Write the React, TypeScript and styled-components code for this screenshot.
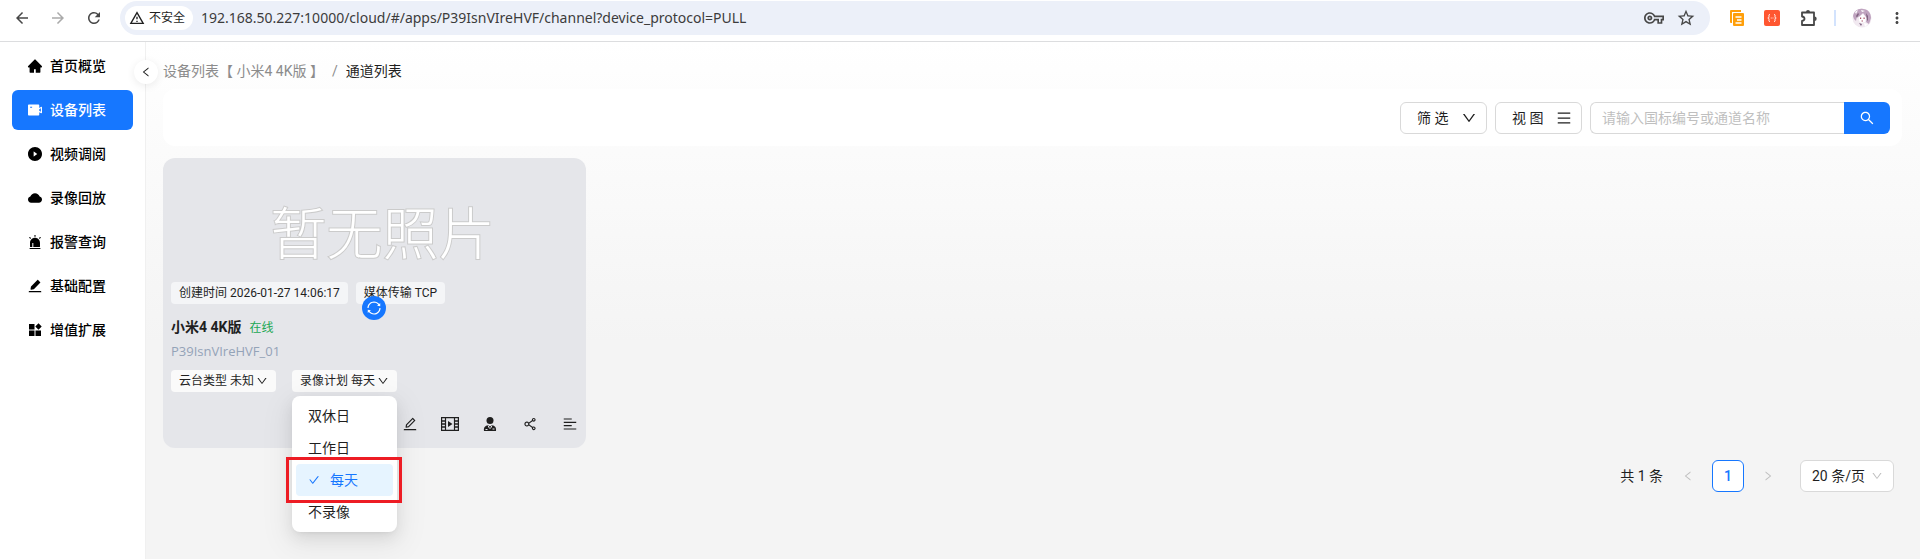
import React from "react";
import styled, { createGlobalStyle, css } from "styled-components";
import {
  AiFillHome, AiFillVideoCamera, AiFillPlayCircle, AiFillCloud, AiFillAlert, AiFillEdit,
  AiOutlineDown, AiOutlineMenu, AiOutlineSearch, AiOutlineSync, AiOutlineCheck, AiOutlineEdit,
  AiOutlineShareAlt, AiOutlineAlignLeft, AiOutlineLeft, AiOutlineRight,
} from "react-icons/ai";
import {
  MdArrowBack, MdArrowForward, MdRefresh, MdOutlineWarningAmber, MdOutlineVpnKey,
  MdStarOutline, MdMoreVert,
} from "react-icons/md";

const Global = createGlobalStyle`
  *, *::before, *::after { box-sizing: border-box; }
  body {
    margin: 0;
    font-family: Roboto, "Noto Sans CJK SC", sans-serif;
    font-size: 14px;
    line-height: 22px;
    color: #1f1f1f;
  }
  button, input, select { font: inherit; color: inherit; }
  button { padding: 0; border: 0; background: none; cursor: pointer; }
  svg { display: block; flex: none; }
`;

const Page = styled.div`
  display: flex;
  flex-direction: column;
  min-height: 100vh;
`;

/* Browser bar */
const BrowserBar = styled.header`
  display: flex;
  align-items: center;
  height: 42px;
  padding: 1px 14px 6px 10px;
  border-bottom: 1px solid #dcdddf;
  background: #fff;
`;
const NavButton = styled.button<{ $muted?: boolean }>`
  display: grid;
  place-items: center;
  width: 24px;
  height: 24px;
  margin-right: 12px;
  color: ${(p) => (p.$muted ? "#aaa" : "#474747")};
`;
const Address = styled.div`
  display: flex;
  align-items: center;
  flex: 1;
  height: 34px;
  margin-left: 2px;
  padding: 0 14px 0 5px;
  border-radius: 17px;
  background: #ecf0f9;
`;
const Insecure = styled.span`
  display: flex;
  align-items: center;
  gap: 4px;
  height: 24px;
  padding: 0 8px 0 4px;
  border-radius: 12px;
  background: #fff;
  font-size: 12px;
`;
const UrlInput = styled.input`
  flex: 1;
  min-width: 0;
  margin-left: 8px;
  padding: 0;
  border: 0;
  outline: 0;
  background: none;
  font-family: "Noto Sans", sans-serif;
  font-size: 14px;
  color: #3c3c3c;
`;
const AddressIcons = styled.div`
  display: flex;
  gap: 12px;
  color: #474747;
`;
const Extensions = styled.div`
  display: flex;
  align-items: center;
  gap: 20px;
  margin: 0 16px 0 20px;
  color: #474747;
`;
const Profile = styled.div`
  display: flex;
  align-items: center;
  gap: 16px;
  color: #474747;
`;
const Separator = styled.span`
  width: 2px;
  height: 16px;
  background: #d3e3fd;
`;

/* Layout */
const Body = styled.div`
  display: flex;
  flex: 1;
`;
const Sidebar = styled.aside`
  position: relative;
  flex: none;
  width: 146px;
  padding: 4px 12px;
  border-right: 1px solid #f0f0f0;
  background: #fff;
`;
const Nav = styled.nav`
  display: flex;
  flex-direction: column;
  gap: 4px;
`;
const NavItem = styled.a<{ $active?: boolean }>`
  display: flex;
  align-items: center;
  gap: 7px;
  height: 40px;
  padding: 0 15px;
  border-radius: 6px;
  font-weight: 500;
  text-decoration: none;
  white-space: nowrap;
  color: #000;
  svg { width: 16px; height: 16px; }
  ${(p) => p.$active && css`
    background: #1677ff;
    color: #fff;
  `}
`;
const Collapse = styled.button`
  position: absolute;
  top: 18px;
  right: -13px;
  display: grid;
  place-items: center;
  width: 24px;
  height: 24px;
  border-radius: 50%;
  background: #fff;
  box-shadow: 0 2px 8px rgba(0, 0, 0, 0.08);
`;
const Main = styled.main`
  flex: 1;
  min-width: 0;
  padding: 18px 18px 24px 17px;
  background: linear-gradient(#fff, #f4f4f4 300px);
`;
const Breadcrumb = styled.nav`
  display: flex;
  gap: 8px;
  color: #8c8c8c;
  a { color: inherit; text-decoration: none; }
  strong { color: #1f1f1f; font-weight: 400; }
`;
const Toolbar = styled.section`
  display: flex;
  justify-content: flex-end;
  gap: 8px;
  margin-top: 7px;
  padding: 13px 12px 12px;
  border-radius: 12px;
  background: #fff;
`;
const ToolButton = styled.button`
  display: flex;
  align-items: center;
  justify-content: space-between;
  width: 87px;
  height: 32px;
  padding: 0 9px 0 16px;
  border: 1px solid #d9d9d9;
  border-radius: 6px;
  background: #fff;
`;
const Search = styled.form`
  display: flex;
  width: 300px;
`;
const SearchInput = styled.input`
  flex: 1;
  min-width: 0;
  height: 32px;
  padding: 0 11px;
  border: 1px solid #d9d9d9;
  border-right: 0;
  border-radius: 6px 0 0 6px;
  outline: 0;
  &::placeholder { color: #bfbfbf; }
`;
const SearchButton = styled.button`
  display: grid;
  place-items: center;
  width: 46px;
  border-radius: 0 6px 6px 0;
  background: #1677ff;
  color: #fff;
`;

/* Channel card */
const Card = styled.article`
  position: relative;
  width: 423px;
  margin-top: 12px;
  border-radius: 12px;
  background: #e5e6ea;
`;
const Cover = styled.div`
  display: flex;
  flex-direction: column;
  height: 146px;
  padding: 0 8px;
`;
const Placeholder = styled.div`
  display: grid;
  place-items: center;
  flex: 1;
  padding: 30px 0 0 16px;
  font-size: 56px;
  line-height: 64px;
  font-weight: 200;
  color: #fff;
  -webkit-text-stroke: 2px #cbcbcb;
  paint-order: stroke fill;
`;
const TagRow = styled.div<{ $gap: number }>`
  display: flex;
  gap: ${(p) => p.$gap}px;
`;
const Tag = styled.span`
  height: 22px;
  padding: 0 8px;
  border-radius: 4px;
  background: #f4f5f7;
  font-size: 12px;
  white-space: nowrap;
`;
const TagButton = styled.button`
  display: flex;
  align-items: center;
  gap: 2px;
  height: 22px;
  padding: 0 8px;
  border-radius: 4px;
  background: #fafafa;
  font-size: 12px;
  line-height: 22px;
  white-space: nowrap;
`;
const Refresh = styled.button`
  position: absolute;
  top: 138px;
  left: 199px;
  display: grid;
  place-items: center;
  width: 24px;
  height: 24px;
  border-radius: 50%;
  background: #1677ff;
  color: #fff;
`;
const Info = styled.div`
  padding: 12px 8px 0;
`;
const TitleRow = styled.div`
  display: flex;
  align-items: baseline;
  gap: 8px;
`;
const Title = styled.h3`
  margin: 0;
  font-size: 14px;
  font-weight: 700;
`;
const Online = styled.span`
  font-size: 12px;
  color: #22a854;
`;
const DeviceId = styled.div`
  margin: 1px 0 8px;
  font-family: "Open Sans", sans-serif;
  font-size: 13px;
  color: #94a3b8;
`;
const Dropdown = styled.div`
  position: relative;
`;
const Menu = styled.ul`
  position: absolute;
  z-index: 1;
  top: 26px;
  left: 0;
  width: 100%;
  margin: 0;
  padding: 4px;
  list-style: none;
  border-radius: 8px;
  background: #fff;
  box-shadow: 0 6px 16px rgba(0, 0, 0, 0.08), 0 3px 6px -4px rgba(0, 0, 0, 0.12), 0 9px 28px 8px rgba(0, 0, 0, 0.05);
`;
const MenuItem = styled.li`
  position: relative;
`;
const MenuButton = styled.button<{ $selected?: boolean }>`
  display: flex;
  align-items: center;
  gap: 10px;
  width: 100%;
  height: 32px;
  padding: 0 12px;
  border-radius: 4px;
  ${(p) => p.$selected && css`
    background: #e6f4ff;
    color: #1677ff;
  `}
`;
const Highlight = styled.span`
  position: absolute;
  inset: -7px -9px -7px -10px;
  z-index: 1;
  border: 3px solid #ed1c24;
  pointer-events: none;
`;
const Actions = styled.div`
  display: flex;
  justify-content: flex-end;
  gap: 22px;
  padding: 23px 7px 15px;
`;
const ActionButton = styled.button`
  display: grid;
  place-items: center;
  width: 18px;
  height: 18px;
  font-size: 16px;
`;

/* Pagination */
const Pagination = styled.footer`
  display: flex;
  align-items: center;
  justify-content: flex-end;
  margin-top: 12px;
  padding-right: 8px;
`;
const Total = styled.span`
  margin-right: 9px;
`;
const PageButton = styled.button<{ $current?: boolean }>`
  display: grid;
  place-items: center;
  width: 32px;
  height: 32px;
  margin-right: 8px;
  border-radius: 6px;
  color: #bfbfbf;
  ${(p) => p.$current && css`
    border: 1px solid #1677ff;
    background: #fff;
    color: #1677ff;
    font-weight: 500;
  `}
`;
const SizeBox = styled.label`
  position: relative;
  display: flex;
  align-items: center;
  margin-left: 8px;
  svg { position: absolute; right: 11px; color: #bfbfbf; pointer-events: none; }
`;
const SizeSelect = styled.select`
  appearance: none;
  width: 94px;
  height: 32px;
  padding: 0 11px;
  border: 1px solid #d9d9d9;
  border-radius: 6px;
  background: #fff;
`;

const WidgetsIcon = () => (
  <svg width="16" height="16" viewBox="0 0 16 16" fill="currentColor" aria-hidden="true">
    <path d="M2 2h5.500v5.500H2zM2 8.500h5.500V14H2zM8.500 8.500H14V14H8.500zM11.500 1.200l3.200 3.300-3.200 3.300-3.200-3.300z" />
  </svg>
);
const FilmIcon = () => (
  <svg width="18" height="14" viewBox="0 0 18 14" fill="none" stroke="currentColor" aria-hidden="true">
    <path strokeWidth="1.200" d="M0.600 0.600h16.800v12.800H0.600zM4.500 0.600v12.800M13.500 0.600v12.800" />
    <path strokeWidth="1.500" d="M0.600 4h3.900M0.600 7h3.900M0.600 10h3.900M13.500 4h3.900M13.500 7h3.900M13.500 10h3.900" />
    <path stroke="none" fill="currentColor" d="M7 4l4.500 3L7 10z" />
  </svg>
);
const PersonIcon = () => (
  <svg width="14" height="14" viewBox="0 0 14 14" aria-hidden="true">
    <circle cx="7" cy="3.500" r="3.500" fill="currentColor" />
    <path fill="currentColor" d="M1 14c-.5-3.500 1-5 4-6l2 1.500L9 8c3 1 4.500 2.500 4 6z" />
    <path stroke="#e5e6ea" fill="none" d="M5 8.500l1.500 3M9 8.500l-1.500 3M2.500 12.500h2M9.500 12h2" />
  </svg>
);
const NotesIcon = () => (
  <svg width="14" height="16" viewBox="0 0 14 16" aria-hidden="true">
    <path fill="#ff9f0a" d="M0 1a1 1 0 0 1 1-1h10v2H2v11H1a1 1 0 0 1-1-1z" />
    <rect x="3" y="3" width="11" height="13" rx="1" fill="#ff9f0a" />
    <path stroke="#fff" strokeWidth="1.400" d="M5.500 7h6M7 10h4.500M5.500 13h6" />
  </svg>
);
const JsonIcon = () => (
  <svg width="16" height="16" viewBox="0 0 16 16" aria-hidden="true">
    <rect width="16" height="16" rx="2" fill="#ff5630" />
    <path stroke="#fff" fill="none" d="M6 4.500c-1.500 0-1 1-1 2s-.3 1.500-1.200 1.500c.9 0 1.200.5 1.200 1.500s-.5 2 1 2M10 4.500c1.500 0 1 1 1 2s.3 1.500 1.200 1.500c-.9 0-1.200.5-1.200 1.500s.5 2-1 2M6.800 8h.8M8.600 8h.8" />
  </svg>
);
const PuzzleIcon = () => (
  <svg width="18" height="18" viewBox="0 0 18 18" aria-hidden="true">
    <path fill="none" stroke="currentColor" strokeWidth="1.800" strokeLinejoin="round" d="M2 3.500h12v12.500H2v-4c1.500-.2 2.500-1 2.500-2.200S3.500 7.700 2 7.500z" />
    <path fill="currentColor" d="M6 3a2 2 0 0 1 4 0zM14.500 7.500a2.200 2.200 0 0 1 0 4.400z" />
  </svg>
);
const Avatar = () => (
  <svg width="20" height="20" viewBox="0 0 20 20" aria-hidden="true">
    <circle cx="10" cy="10" r="9.500" fill="#f1e9f0" />
    <path fill="#bfa3bf" d="M1 8C2 3 6 0 11 1c5 0 8 4 8 9l-2 6-3-2 1-4-4-5-4 4-2-1-1 5-2-2z" />
    <path fill="#806480" d="M4 8l2-3 1 1-2 4zM14 5l2 3v4l-1 1zM7 15l3 1-1 2z" />
    <path fill="#fff" d="M7 9l4-3 3 4-1 4-4 1-2-2zM3 4l3-2-2 4zM12 15l4 1-3 3zM9 2l4 1-3 1z" />
    <path fill="#a8546a" d="M8 9.500h1.200v1.500H8zM11.500 9.500h1.200v1.500h-1.200zM9.500 12.500h1.500v1H9.500z" />
  </svg>
);

const navItems = [
  { label: "首页概览", icon: <AiFillHome /> },
  { label: "设备列表", icon: <AiFillVideoCamera />, active: true },
  { label: "视频调阅", icon: <AiFillPlayCircle /> },
  { label: "录像回放", icon: <AiFillCloud /> },
  { label: "报警查询", icon: <AiFillAlert /> },
  { label: "基础配置", icon: <AiFillEdit /> },
  { label: "增值扩展", icon: <WidgetsIcon /> },
];
const plans = ["双休日", "工作日", "每天", "不录像"];
const actions = [
  { label: "编辑", icon: <AiOutlineEdit /> },
  { label: "播放", icon: <FilmIcon /> },
  { label: "用户", icon: <PersonIcon /> },
  { label: "分享", icon: <AiOutlineShareAlt /> },
  { label: "更多", icon: <AiOutlineAlignLeft /> },
];

export default function App() {
  return (
    <Page>
      <Global />
      <BrowserBar>
        <NavButton aria-label="后退"><MdArrowBack size={18} /></NavButton>
        <NavButton aria-label="前进" $muted><MdArrowForward size={18} /></NavButton>
        <NavButton aria-label="刷新"><MdRefresh size={18} /></NavButton>
        <Address>
          <Insecure><MdOutlineWarningAmber size={16} />不安全</Insecure>
          <UrlInput aria-label="地址" defaultValue="192.168.50.227:10000/cloud/#/apps/P39IsnVIreHVF/channel?device_protocol=PULL" />
          <AddressIcons>
            <MdOutlineVpnKey size={20} />
            <MdStarOutline size={20} />
          </AddressIcons>
        </Address>
        <Extensions>
          <NotesIcon />
          <JsonIcon />
          <PuzzleIcon />
        </Extensions>
        <Profile>
          <Separator />
          <Avatar />
          <MdMoreVert size={18} />
        </Profile>
      </BrowserBar>
      <Body>
        <Sidebar>
          <Nav aria-label="主菜单">
            {navItems.map((item) => (
              <NavItem key={item.label} href="#" $active={item.active}>
                {item.icon}
                {item.label}
              </NavItem>
            ))}
          </Nav>
          <Collapse aria-label="收起菜单"><AiOutlineLeft size={12} /></Collapse>
        </Sidebar>
        <Main>
          <Breadcrumb aria-label="路径">
            <a href="#">设备列表【 小米4 4K版 】</a>
            <span>/</span>
            <strong>通道列表</strong>
          </Breadcrumb>
          <Toolbar>
            <ToolButton>筛 选<AiOutlineDown size={16} /></ToolButton>
            <ToolButton>视 图<AiOutlineMenu size={16} /></ToolButton>
            <Search onSubmit={(e) => e.preventDefault()}>
              <SearchInput aria-label="搜索通道" placeholder="请输入国标编号或通道名称" />
              <SearchButton aria-label="搜索"><AiOutlineSearch size={16} /></SearchButton>
            </Search>
          </Toolbar>
          <Card>
            <Cover>
              <Placeholder>暂无照片</Placeholder>
              <TagRow $gap={8}>
                <Tag>创建时间 2026-01-27 14:06:17</Tag>
                <Tag>媒体传输 TCP</Tag>
              </TagRow>
            </Cover>
            <Refresh aria-label="刷新画面"><AiOutlineSync size={16} /></Refresh>
            <Info>
              <TitleRow>
                <Title>小米4 4K版</Title>
                <Online>在线</Online>
              </TitleRow>
              <DeviceId>P39IsnVIreHVF_01</DeviceId>
              <TagRow $gap={16}>
                <TagButton>云台类型 未知<AiOutlineDown size={12} /></TagButton>
                <Dropdown>
                  <TagButton aria-expanded="true">录像计划 每天<AiOutlineDown size={12} /></TagButton>
                  <Menu>
                    {plans.map((plan) => (
                      <MenuItem key={plan}>
                        <MenuButton $selected={plan === "每天"}>
                          {plan === "每天" && <AiOutlineCheck size={12} />}
                          {plan}
                        </MenuButton>
                        {plan === "每天" && <Highlight />}
                      </MenuItem>
                    ))}
                  </Menu>
                </Dropdown>
              </TagRow>
            </Info>
            <Actions>
              {actions.map((action) => (
                <ActionButton key={action.label} aria-label={action.label}>{action.icon}</ActionButton>
              ))}
            </Actions>
          </Card>
          <Pagination>
            <Total>共 1 条</Total>
            <PageButton aria-label="上一页"><AiOutlineLeft size={12} /></PageButton>
            <PageButton $current>1</PageButton>
            <PageButton aria-label="下一页"><AiOutlineRight size={12} /></PageButton>
            <SizeBox>
              <SizeSelect aria-label="每页条数"><option>20 条/页</option></SizeSelect>
              <AiOutlineDown size={12} />
            </SizeBox>
          </Pagination>
        </Main>
      </Body>
    </Page>
  );
}
